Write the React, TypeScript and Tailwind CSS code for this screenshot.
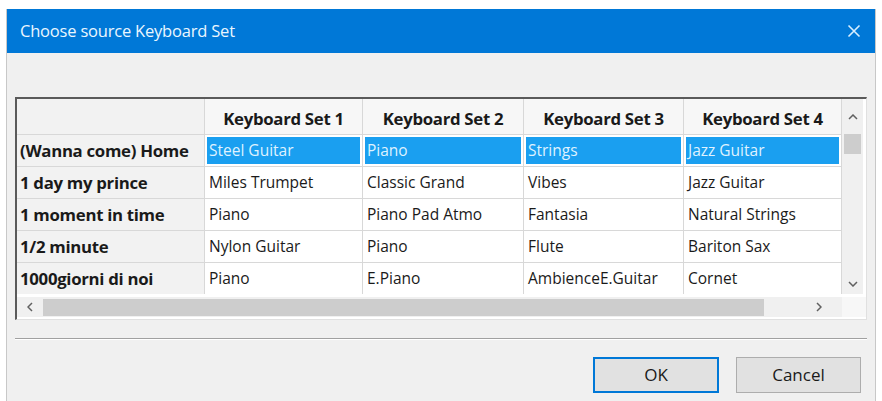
import React from "react";

const cols = ["Keyboard Set 1", "Keyboard Set 2", "Keyboard Set 3", "Keyboard Set 4"];
const rows: { name: string; cells: string[] }[] = [
  { name: "(Wanna come) Home", cells: ["Steel Guitar", "Piano", "Strings", "Jazz Guitar"] },
  { name: "1 day my prince", cells: ["Miles Trumpet", "Classic Grand", "Vibes", "Jazz Guitar"] },
  { name: "1 moment in time", cells: ["Piano", "Piano Pad Atmo", "Fantasia", "Natural Strings"] },
  { name: "1/2 minute", cells: ["Nylon Guitar", "Piano", "Flute", "Bariton Sax"] },
  { name: "1000giorni di noi", cells: ["Piano", "E.Piano", "AmbienceE.Guitar", "Cornet"] },
];
const widths = ["w-[158px]", "w-[161px]", "w-[160px]", "w-[158px]"];

export default function App() {
  return (
    <div
      className="w-[882px] h-[401px] bg-white pt-[9px] pl-[6px] overflow-hidden"
      style={{ fontFamily: '"Open Sans", "Noto Sans", sans-serif' }}
    >
      <div className="w-[870px] h-[392px] bg-[#f0f0f0] border-x border-[#c8c8c8] flex flex-col">
        {/* Title bar */}
        <div className="h-[44px] bg-[#0078d7] flex items-center justify-between pl-[13px] pr-[12px] shrink-0">
          <span className="text-[16.5px] text-[#eaf6ff] tracking-[-0.2px]">Choose source Keyboard Set</span>
          <svg width="14" height="14" viewBox="0 0 14 14" className="mr-[2px]">
            <path d="M1.5 1.5 L12.5 12.5 M12.5 1.5 L1.5 12.5" stroke="#d8efff" strokeWidth="1.6" />
          </svg>
        </div>

        <div className="pt-[44px] pl-[8px] pr-[8px] flex flex-col">
          {/* Grid */}
          <div className="w-[852px] h-[223px] border-l-2 border-t-2 border-[#5a5a5a] border-r border-r-[#e0e0e0] border-b border-b-[#e0e0e0] bg-white flex flex-col text-[15.5px] text-[#1a1a1a]">
            <div className="flex flex-1">
              <div className="flex flex-col">
                {/* header row */}
                <div className="flex h-[35px]">
                  <div className="w-[188px] bg-[#f2f2f2] border-r border-[#d8d8d8]" />
                  {cols.map((c, i) => (
                    <div
                      key={c}
                      className={`${widths[i]} bg-[#f7f7f7] border-r border-[#d8d8d8] flex items-center justify-center pt-[4px] font-bold text-[16.8px] tracking-[-0.3px]`}
                    >
                      {c}
                    </div>
                  ))}
                </div>
                {rows.map((r, ri) => (
                  <div key={r.name} className="flex h-[32px] border-t border-[#d8d8d8]">
                    <div className="w-[188px] bg-[#f2f2f2] border-r border-[#d8d8d8] flex items-center pl-[3px] font-bold text-[16.8px] tracking-[-0.3px] whitespace-nowrap">
                      {r.name}
                    </div>
                    {r.cells.map((c, ci) => (
                      <div key={ci} className={`${widths[ci]} border-r border-[#d8d8d8] flex p-[2px]`}>
                        {ri === 0 ? (
                          <div className="flex-1 bg-[#1a9ff0] text-[#dff2ff] flex items-center pl-[2px] whitespace-nowrap">{c}</div>
                        ) : (
                          <div className="flex-1 flex items-center pl-[2px] whitespace-nowrap">{c}</div>
                        )}
                      </div>
                    ))}
                  </div>
                ))}
              </div>
              {/* vertical scrollbar */}
              <div className="w-[21px] bg-[#f0f0f0] flex flex-col items-center">
                <div className="h-[35px] flex items-center justify-center">
                  <svg width="10" height="6" viewBox="0 0 10 6">
                    <path d="M1 5 L5 1 L9 5" stroke="#606060" strokeWidth="1.5" fill="none" />
                  </svg>
                </div>
                <div className="w-[17px] h-[20px] bg-[#cdcdcd]" />
                <div className="flex-1" />
                <div className="h-[20px] flex items-center justify-center">
                  <svg width="10" height="6" viewBox="0 0 10 6">
                    <path d="M1 1 L5 5 L9 1" stroke="#606060" strokeWidth="1.5" fill="none" />
                  </svg>
                </div>
              </div>
            </div>
            {/* horizontal scrollbar */}
            <div className="flex h-[21px] mt-[3px] mb-[2px]">
              <div className="w-[825px] bg-[#f0f0f0] flex items-center">
                <div className="w-[26px] flex items-center justify-center">
                  <svg width="6" height="10" viewBox="0 0 6 10">
                    <path d="M5 1 L1 5 L5 9" stroke="#606060" strokeWidth="1.5" fill="none" />
                  </svg>
                </div>
                <div className="w-[721px] h-[17px] bg-[#cdcdcd]" />
                <div className="flex-1 flex items-center justify-center pl-[32px]">
                  <svg width="6" height="10" viewBox="0 0 6 10">
                    <path d="M1 1 L5 5 L1 9" stroke="#606060" strokeWidth="1.5" fill="none" />
                  </svg>
                </div>
              </div>
              <div className="flex-1 bg-[#f7f7f7]" />
            </div>
          </div>

          {/* separator */}
          <div className="mt-[18px] h-[1px] w-[852px] bg-[#a0a0a0]" />
          <div className="h-[1px] w-[852px] bg-white" />

          {/* buttons */}
          <div className="flex justify-end gap-[17px] mt-[17px] pr-[6px]">
            <button className="w-[126px] h-[36px] bg-[#e1e1e1] border-2 border-[#0078d7] text-[17px] text-[#1a1a1a]">
              OK
            </button>
            <button className="w-[125px] h-[36px] bg-[#e1e1e1] border border-[#adadad] text-[17px] text-[#1a1a1a]">
              Cancel
            </button>
          </div>
        </div>
      </div>
    </div>
  );
}
